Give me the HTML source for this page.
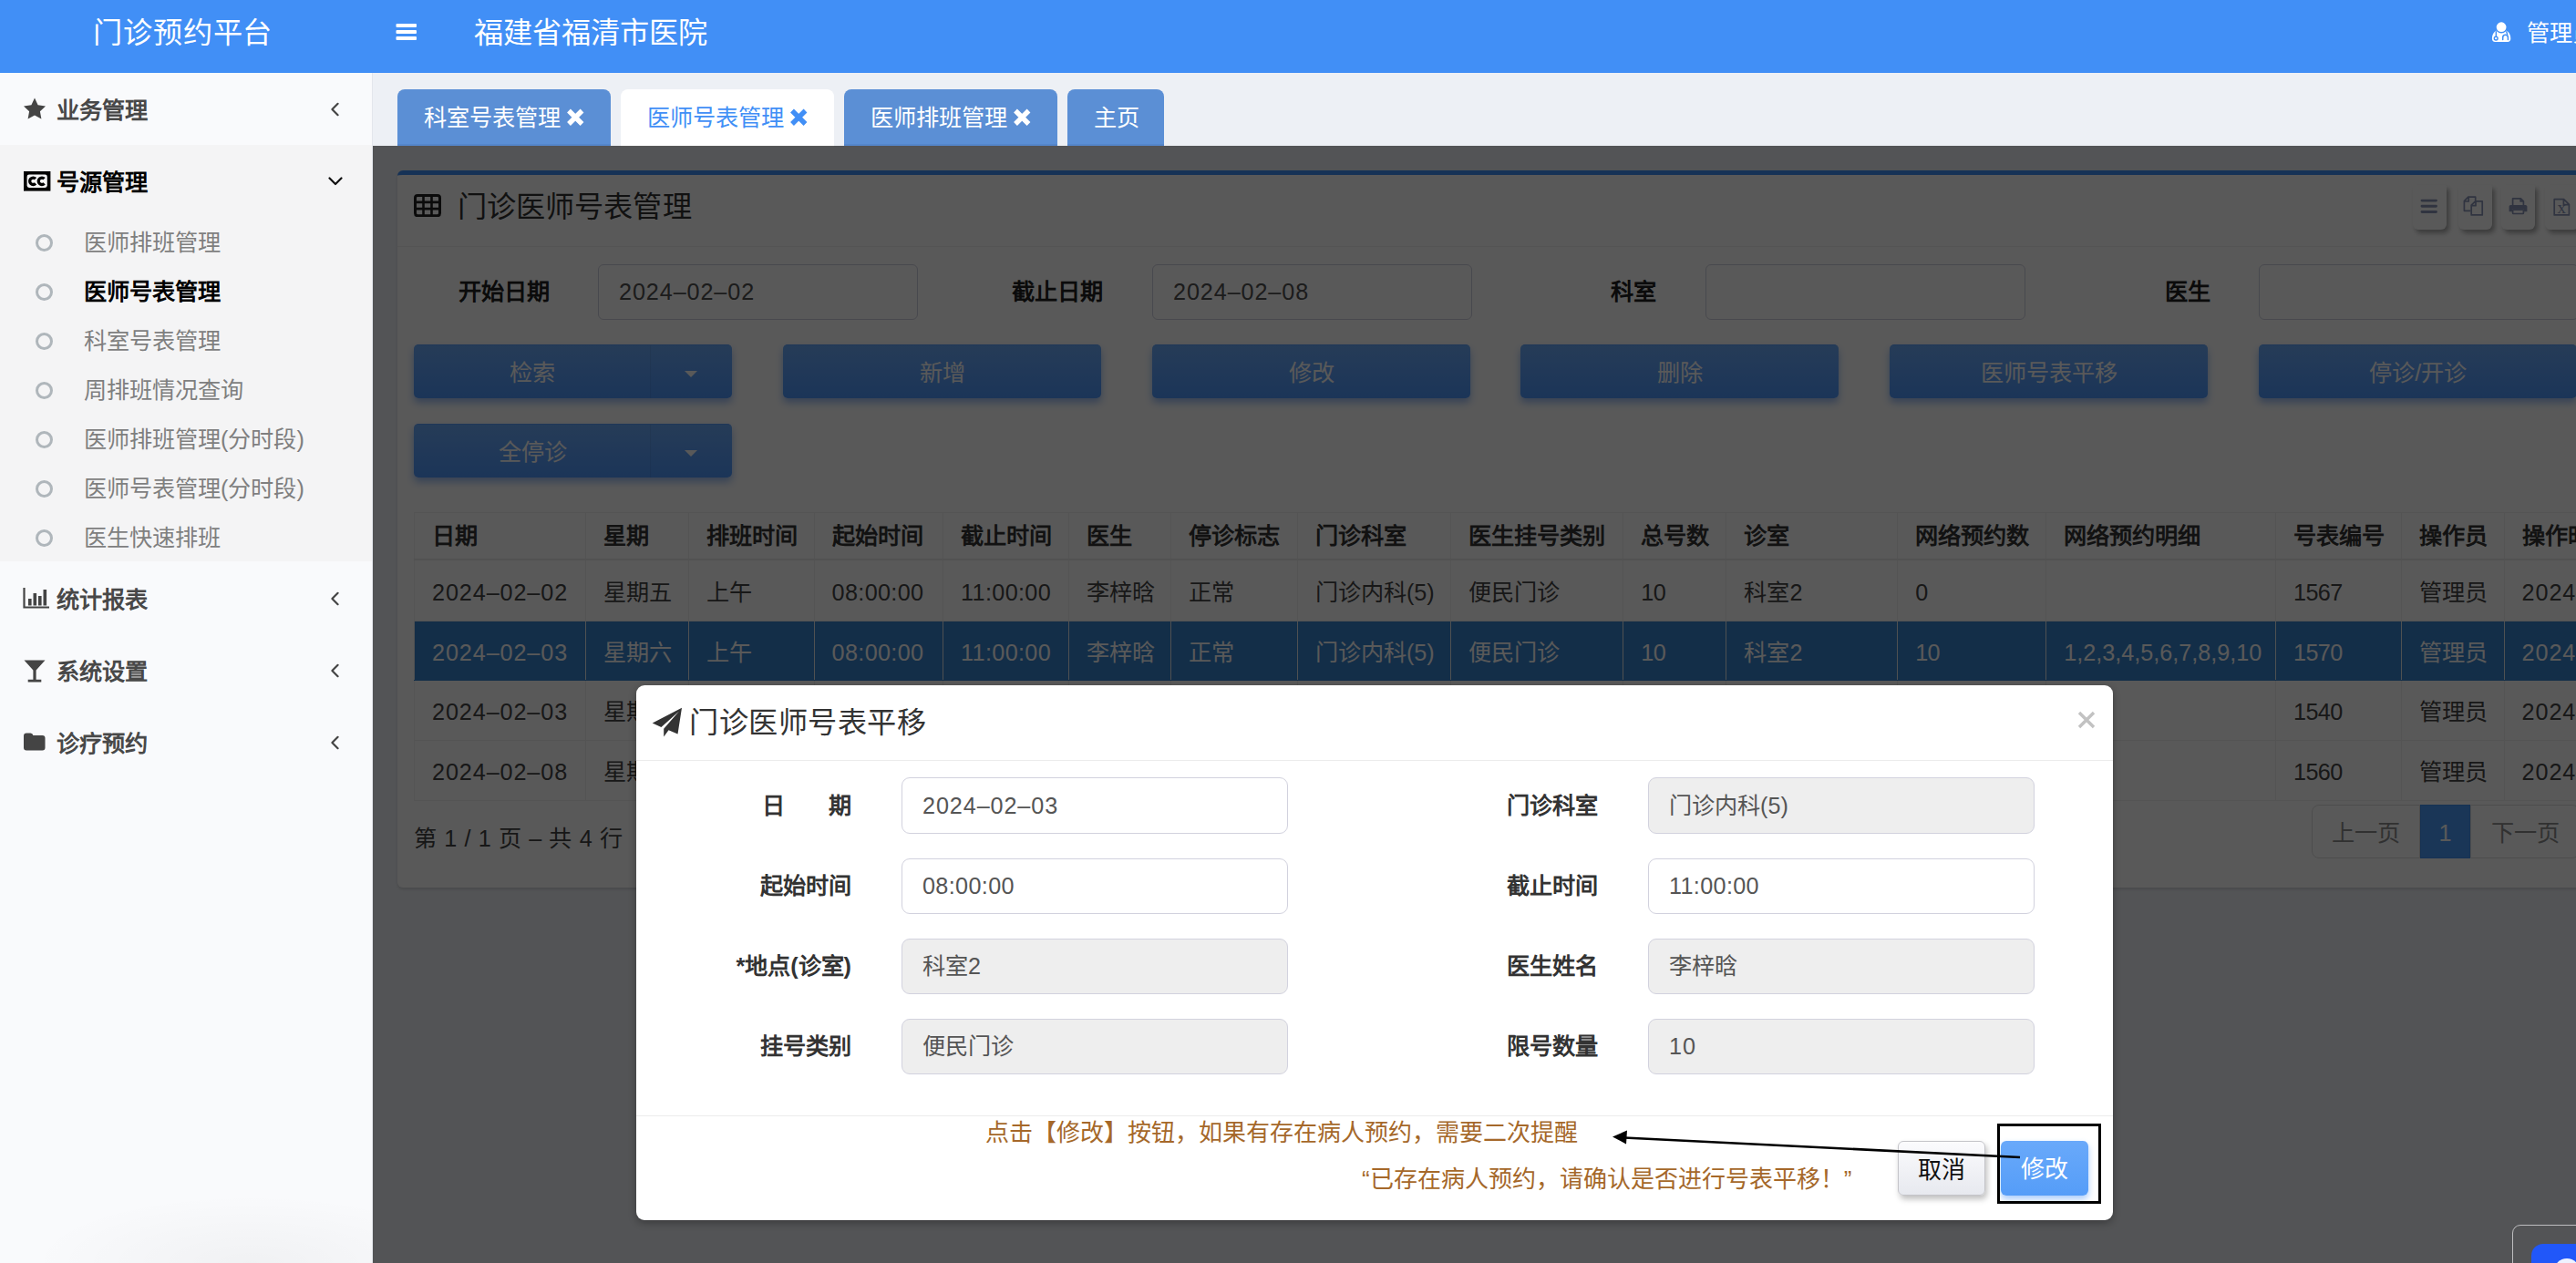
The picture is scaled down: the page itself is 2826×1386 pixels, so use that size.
<!DOCTYPE html>
<html lang="zh-CN">
<head>
<meta charset="utf-8">
<title>门诊预约平台</title>
<style>
*{box-sizing:border-box;margin:0;padding:0}
html,body{width:2826px;height:1386px;overflow:hidden}
body{font-family:"Liberation Sans",sans-serif;background:#edf0f5;position:relative;color:#333;font-size:25.2px}
.abs{position:absolute}
.nw{white-space:nowrap}
/* header */
#hdr{position:absolute;left:0;top:0;width:2826px;height:80px;background:#418ff6;color:#fff}
#hdr .t{position:absolute;top:1px;height:70px;line-height:70px;font-size:32.2px;white-space:nowrap}
/* sidebar */
#side{position:absolute;left:0;top:80px;width:409px;height:1306px;background:radial-gradient(ellipse 240px 75px at 275px 100%,rgba(0,0,0,.035),rgba(0,0,0,0) 100%),#f9fafc;border-right:1px solid #e3e6ec}
.mi{position:absolute;left:0;width:408px;height:79px;line-height:82px;font-weight:bold;color:#484848;font-size:25.2px;white-space:nowrap}
.mi .tx{position:absolute;left:62px;top:0}
.mi svg{position:absolute}
.sub{position:absolute;left:0;width:408px;height:54px;line-height:55px;color:#7f7f7f;white-space:nowrap}
.sub i{position:absolute;left:39px;top:17.5px;width:19px;height:19px;border:3px solid #afb6bb;border-radius:50%}
.sub span{position:absolute;left:92px;top:0}
/* tabs */
.tab{position:absolute;top:98px;height:62px;line-height:63px;background:#5b8fd5;color:#fff;border-radius:8px 8px 0 0;padding-left:28.5px;white-space:nowrap;font-size:25.2px;border-bottom:2px solid #5486cb}
.tab.act{background:#fff;color:#418ff6;border-bottom:none;height:63px}
.tab svg{position:absolute;top:21px}

/* content card */
#card{position:absolute;left:436px;top:187px;width:2466px;height:786.5px;background:#fff;border-top:5px solid #418ff6;border-radius:6px;box-shadow:0 2px 3px rgba(0,0,0,.12)}
#card .hd{position:absolute;left:0;top:0;width:100%;height:79px;border-bottom:1px solid #f0f0f0}
#card .ttl{position:absolute;left:65.5px;top:2px;letter-spacing:.15px;height:66px;line-height:66px;font-size:32.2px;color:#333;white-space:nowrap}
.tb{position:absolute;top:11px;width:37px;height:48.7px;background:#fff;border-radius:2px 2px 6px 6px;box-shadow:3px 4px 5px rgba(0,0,0,.32)}
.tb svg{position:absolute;left:7.5px;top:13px}
.flab{position:absolute;top:98px;height:60px;line-height:61px;margin-left:1.5px;font-weight:bold;color:#222;text-align:right;width:160px;white-space:nowrap}
.finp{position:absolute;top:98px;width:350.8px;height:60.6px;line-height:59px;border:1px solid #cfd0e0;border-radius:6px;background:#fff;padding-left:22px;color:#505050;white-space:nowrap}
.btn{position:absolute;width:349.3px;height:58.7px;line-height:61px;text-align:center;color:#fff;border-radius:5px;background:linear-gradient(#6dabfa,#4f98fd);box-shadow:0 5px 8px rgba(50,120,235,.48);white-space:nowrap;font-size:25.2px;border-top:1px solid #5a9df8}
.btn .sp{position:absolute;left:259px;top:0;width:1px;height:58px;background:rgba(0,0,0,.06)}
.btn .car{position:absolute;left:297px;top:28px;width:0;height:0;border-left:7.5px solid transparent;border-right:7.5px solid transparent;border-top:7.5px solid #fff}
table{position:absolute;left:18px;top:370px;border-collapse:collapse;table-layout:fixed;width:2432.7px}
th,td{border:1px solid #f1f1f1;padding:0 0 0 19px;text-align:left;white-space:nowrap;overflow:hidden;font-size:25.2px}
th{height:51px;font-weight:bold;color:#363636;line-height:30px;vertical-align:middle;padding-top:1px;border-bottom:2px solid #ececec}
td{height:66px;color:#464646;line-height:30px;vertical-align:middle;padding-top:2px}
tr.alt td{background:#fff}
tr.r1 td{height:68px;padding-top:4px}
tr.sel td{height:65.2px;padding-top:3px}
tr.sel td{background:#3783cd;color:#fff;border-color:#3783cd #e3e7ec}
.pgi{position:absolute;left:18px;top:698px;height:60px;line-height:60px;color:#444;white-space:nowrap;letter-spacing:.62px}
.pg{position:absolute;top:691px;height:59px;line-height:61px;text-align:center;color:#8c8c8c;border:1px solid #ddd;white-space:nowrap;font-size:25.2px}
.n{letter-spacing:.9px}
.tm{letter-spacing:.35px}
.d{letter-spacing:-.6px}

/* backdrop + modal */
#bd{position:absolute;left:409px;top:160px;width:2417px;height:1226px;background:rgba(0,0,0,.65)}
#modal{position:absolute;left:698px;top:752px;width:1620px;height:587px;background:#fff;border-radius:9px;box-shadow:0 3px 9px rgba(0,0,0,.3)}
#modal .mh{position:absolute;left:0;top:0;width:100%;height:83px;border-bottom:1px solid #ececec}
#modal .mt{position:absolute;left:58px;top:8px;letter-spacing:.5px;height:66px;line-height:66px;font-size:32.2px;color:#333;white-space:nowrap}
#modal .mf{position:absolute;left:0;top:472px;width:100%;height:1px;background:#ececec}
.ml{position:absolute;height:60px;line-height:60px;font-weight:bold;color:#333;text-align:right;width:220px;white-space:nowrap}
.mi2{position:absolute;width:424px;height:61px;line-height:59px;border:1px solid #d2d2de;border-radius:9px;background:#fff;padding-left:22px;color:#555;white-space:nowrap}
.mi2.dis{background:#eeeeee}
.note{position:absolute;color:#a5682a;font-size:26px;white-space:nowrap;height:40px;line-height:42px}
.b2{position:absolute;top:500px;width:96px;height:60px;line-height:62px;text-align:center;font-size:26px;border-radius:6px;white-space:nowrap}
</style>
</head>
<body>
<!-- HEADER -->
<div id="hdr">
  <div class="t" style="left:102px;letter-spacing:.9px">门诊预约平台</div>
  <svg class="abs" style="left:434px;top:25px" width="24" height="20" viewBox="0 0 24 20"><rect x="0.5" y="1" width="22.5" height="4" rx="1" fill="#fff"/><rect x="0.5" y="8" width="22.5" height="4" rx="1" fill="#fff"/><rect x="0.5" y="15" width="22.5" height="4" rx="1" fill="#fff"/></svg>
  <div class="t" style="left:520px">福建省福清市医院</div>
  <svg class="abs" style="left:2733px;top:24px" width="22" height="23" viewBox="0 0 22 23"><path d="M0.9 18.6 C0.9 14 3 10.8 6 9.6 L16.2 9.6 C19.2 10.8 21.3 14 21.3 18.6 C21.3 20.8 20 22.1 18 22.1 L4.2 22.1 C2.2 22.1 0.9 20.8 0.9 18.6Z" fill="#fff"/><circle cx="11.1" cy="5.7" r="6.7" fill="#418ff6"/><circle cx="11.1" cy="5.7" r="5.4" fill="#fff"/><path d="M5.3 10.2 V16.2" stroke="#418ff6" stroke-width="1.4" fill="none"/><circle cx="5.2" cy="18.1" r="1.9" fill="#fff" stroke="#418ff6" stroke-width="1.4"/><path d="M16.6 10.2 L17.8 14.4" stroke="#418ff6" stroke-width="1.4" fill="none"/><path d="M12.7 19.6 V17.2 C12.7 13.4 18.4 13.4 18.4 17.2 V19.6" fill="none" stroke="#418ff6" stroke-width="1.5" stroke-linecap="round"/></svg>
  <div class="t" style="left:2772px;font-size:25.2px">管理员</div>
</div>

<!-- SIDEBAR -->
<div id="side">
  <div class="abs" style="left:0;top:79px;width:408px;height:457px;background:#f4f4f5"></div>
  <div class="mi" style="top:0">
    <svg style="left:25px;top:27px" width="26" height="25" viewBox="0 0 26 25"><path d="M13 0.6 L16.6 8.3 L25 9.4 L18.9 15.2 L20.4 23.6 L13 19.5 L5.6 23.6 L7.1 15.2 L1 9.4 L9.4 8.3Z" fill="#444"/></svg>
    <span class="tx">业务管理</span>
    <svg style="left:362px;top:32px" width="12" height="16" viewBox="0 0 12 16"><path d="M8.6 1.8 L2.4 8 L8.6 14.2" fill="none" stroke="#444" stroke-width="2.2" stroke-linecap="round" stroke-linejoin="round"/></svg>
  </div>
  <div class="mi" style="top:79px;color:#000">
    <svg style="left:25.5px;top:28.5px" width="30" height="22" viewBox="0 0 30 22"><rect x="0" y="0" width="29.4" height="21.6" fill="#000"/><rect x="3.6" y="3.6" width="22.2" height="14.4" rx="2.4" fill="#f4f4f5"/><path d="M13 8.2 A3.7 3.7 0 1 0 13 13.4" fill="none" stroke="#000" stroke-width="3.3"/><path d="M22.6 8.2 A3.7 3.7 0 1 0 22.6 13.4" fill="none" stroke="#000" stroke-width="3.3"/></svg>
    <span class="tx">号源管理</span>
    <svg style="left:360px;top:34px" width="16" height="12" viewBox="0 0 16 12"><path d="M1.5 2.5 L8 9 L14.5 2.5" fill="none" stroke="#111" stroke-width="2.2" stroke-linecap="round" stroke-linejoin="round"/></svg>
  </div>
  <div class="sub" style="top:159px"><i></i><span>医师排班管理</span></div>
  <div class="sub" style="top:213px;color:#000;font-weight:bold"><i></i><span>医师号表管理</span></div>
  <div class="sub" style="top:267px"><i></i><span>科室号表管理</span></div>
  <div class="sub" style="top:321px"><i></i><span>周排班情况查询</span></div>
  <div class="sub" style="top:375px"><i></i><span>医师排班管理(分时段)</span></div>
  <div class="sub" style="top:429px"><i></i><span>医师号表管理(分时段)</span></div>
  <div class="sub" style="top:483px"><i></i><span>医生快速排班</span></div>
  <div class="mi" style="top:537px">
    <svg style="left:25px;top:27px" width="30" height="24" viewBox="0 0 30 24"><path d="M1.5 1 V22.5 H29" fill="none" stroke="#444" stroke-width="2.2"/><rect x="6" y="13" width="3.6" height="7.5" fill="#444"/><rect x="11.5" y="7" width="3.6" height="13.5" fill="#444"/><rect x="17" y="10" width="3.6" height="10.5" fill="#444"/><rect x="22.5" y="3" width="3.6" height="17.5" fill="#444"/></svg>
    <span class="tx">统计报表</span>
    <svg style="left:362px;top:32px" width="12" height="16" viewBox="0 0 12 16"><path d="M8.6 1.8 L2.4 8 L8.6 14.2" fill="none" stroke="#444" stroke-width="2.2" stroke-linecap="round" stroke-linejoin="round"/></svg>
  </div>
  <div class="mi" style="top:616px">
    <svg style="left:26px;top:28px" width="24" height="25" viewBox="0 0 24 25"><path d="M0.5 0.5 H23.5 L13.6 11.5 V21.7 H19.3 V24.5 H4.7 V21.7 H10.4 V11.5Z" fill="#444"/></svg>
    <span class="tx">系统设置</span>
    <svg style="left:362px;top:32px" width="12" height="16" viewBox="0 0 12 16"><path d="M8.6 1.8 L2.4 8 L8.6 14.2" fill="none" stroke="#444" stroke-width="2.2" stroke-linecap="round" stroke-linejoin="round"/></svg>
  </div>
  <div class="mi" style="top:695px">
    <svg style="left:26px;top:29px" width="24" height="20" viewBox="0 0 24 20"><path d="M0 3.5 Q0 0.5 3 0.5 H7.5 Q10 0.5 10.3 3 H20.5 Q23.5 3 23.5 6 V16.5 Q23.5 19.5 20.5 19.5 H3 Q0 19.5 0 16.5Z" fill="#444"/></svg>
    <span class="tx">诊疗预约</span>
    <svg style="left:362px;top:32px" width="12" height="16" viewBox="0 0 12 16"><path d="M8.6 1.8 L2.4 8 L8.6 14.2" fill="none" stroke="#444" stroke-width="2.2" stroke-linecap="round" stroke-linejoin="round"/></svg>
  </div>
</div>

<!-- TABS -->
<div class="tab" style="left:436px;width:234px">科室号表管理<svg style="left:186px" width="19" height="19" viewBox="0 0 19 19"><path d="M2 2.5 L16.5 17 M16.5 2.5 L2 17" stroke="#fff" stroke-width="5.4" stroke-linecap="butt"/></svg></div>
<div class="tab act" style="left:681px;width:234px">医师号表管理<svg style="left:186px" width="19" height="19" viewBox="0 0 19 19"><path d="M2 2.5 L16.5 17 M16.5 2.5 L2 17" stroke="#418ff6" stroke-width="5.4" stroke-linecap="butt"/></svg></div>
<div class="tab" style="left:926px;width:234px">医师排班管理<svg style="left:186px" width="19" height="19" viewBox="0 0 19 19"><path d="M2 2.5 L16.5 17 M16.5 2.5 L2 17" stroke="#fff" stroke-width="5.4" stroke-linecap="butt"/></svg></div>
<div class="tab" style="left:1171px;width:106px">主页</div>

<!--CONTENT-->
<div id="card">
  <div class="hd">
    <svg class="abs" style="left:18px;top:21px" width="30" height="25" viewBox="0 0 30 25"><rect x="1.5" y="1.5" width="27" height="22.2" rx="2.6" fill="none" stroke="#222" stroke-width="3"/><path d="M1 8.9 H29 M1 16.1 H29 M10.5 2 V23 M19.5 2 V23" stroke="#222" stroke-width="2.6" fill="none"/></svg>
    <div class="ttl">门诊医师号表管理</div>
    <div class="tb" style="left:2211px"><svg width="24" height="24" viewBox="0 0 24 24"><path d="M2 4.1 H17.5 M2 10.3 H17.5 M2 16.5 H17.5" stroke="#8a95b8" stroke-width="2.9" stroke-linecap="round" fill="none"/></svg></div>
    <div class="tb" style="left:2261px"><svg width="24" height="24" viewBox="0 0 24 24" style="top:12px;left:4.5px"><path d="M8.4 16.3 H1.4 V5.6 L5.8 1.2 H13.7 V5.4 M1.4 6 H6.2 V1.4" fill="none" stroke="#8a95b8" stroke-width="1.7" stroke-linejoin="round"/><path d="M9.2 10.2 L13.6 5.9 H21.2 V20.9 H9.2Z M9.2 10.7 H14 V6" fill="none" stroke="#8a95b8" stroke-width="1.7" stroke-linejoin="round"/></svg></div>
    <div class="tb" style="left:2308px"><svg width="24" height="24" viewBox="0 0 24 24" style="top:12px"><path d="M4.6 10.5 V2.8 H13.4 L16.4 5.8 V10.5 M13.2 3 V6 H16.2" fill="none" stroke="#8a95b8" stroke-width="1.7" stroke-linejoin="round"/><path d="M.6 11.6 Q.6 9.9 2.3 9.9 H18.7 Q20.4 9.9 20.4 11.6 V17.3 H16.6 V14.6 H4.4 V17.3 H.6Z" fill="#8a95b8"/><rect x="4.6" y="15.2" width="11.8" height="4.3" rx="0.8" fill="none" stroke="#8a95b8" stroke-width="1.7"/></svg></div>
    <div class="tb" style="left:2356px"><svg width="24" height="24" viewBox="0 0 24 24" style="top:12px"><path d="M2.2 3.6 H12.6 L18.4 9.4 V20.9 H2.2Z M12.4 3.8 V9.6 H18.2" fill="none" stroke="#8a95b8" stroke-width="1.7" stroke-linejoin="round"/><text x="5.4" y="18.8" font-size="19" font-family="Liberation Serif,serif" fill="#8a95b8">x</text></svg></div>
  </div>
  <div class="flab" style="left:5px">开始日期</div><div class="finp n" style="left:220px">2024–02–02</div>
  <div class="flab" style="left:612px">截止日期</div><div class="finp n" style="left:828px">2024–02–08</div>
  <div class="flab" style="left:1219px">科室</div><div class="finp" style="left:1435px"></div>
  <div class="flab" style="left:1827px">医生</div><div class="finp" style="left:2042px"></div>

  <div class="btn" style="left:18px;top:186px"><span style="position:absolute;left:0;width:260px">检索</span><i class="sp"></i><i class="car"></i></div>
  <div class="btn" style="left:423px;top:186px">新增</div>
  <div class="btn" style="left:828px;top:186px">修改</div>
  <div class="btn" style="left:1232px;top:186px">删除</div>
  <div class="btn" style="left:1637px;top:186px">医师号表平移</div>
  <div class="btn" style="left:2042px;top:186px">停诊/开诊</div>
  <div class="btn" style="left:18px;top:273px"><span style="position:absolute;left:0;width:260px">全停诊</span><i class="sp"></i><i class="car"></i></div>

  <table>
    <colgroup><col style="width:187.5px"><col style="width:113.3px"><col style="width:137.8px"><col style="width:141.5px"><col style="width:137.8px"><col style="width:112.4px"><col style="width:138.6px"><col style="width:168.6px"><col style="width:188.8px"><col style="width:113.2px"><col style="width:187.7px"><col style="width:163.1px"><col style="width:251.8px"><col style="width:138.2px"><col style="width:112.4px"><col style="width:140px"></colgroup>
    <tr><th>日期</th><th>星期</th><th>排班时间</th><th>起始时间</th><th>截止时间</th><th>医生</th><th>停诊标志</th><th>门诊科室</th><th>医生挂号类别</th><th>总号数</th><th>诊室</th><th>网络预约数</th><th>网络预约明细</th><th>号表编号</th><th>操作员</th><th>操作时间</th></tr>
    <tr class="alt r1"><td class="n">2024–02–02</td><td>星期五</td><td>上午</td><td class="tm">08:00:00</td><td class="tm">11:00:00</td><td>李梓晗</td><td>正常</td><td>门诊内科(5)</td><td>便民门诊</td><td class="d">10</td><td>科室2</td><td class="d">0</td><td></td><td class="d">1567</td><td>管理员</td><td class="n">2024–02–01</td></tr>
    <tr class="sel"><td class="n">2024–02–03</td><td>星期六</td><td>上午</td><td class="tm">08:00:00</td><td class="tm">11:00:00</td><td>李梓晗</td><td>正常</td><td>门诊内科(5)</td><td>便民门诊</td><td class="d">10</td><td>科室2</td><td class="d">10</td><td>1,2,3,4,5,6,7,8,9,10</td><td class="d">1570</td><td>管理员</td><td class="n">2024–02–01</td></tr>
    <tr class="alt"><td class="n">2024–02–03</td><td>星期六</td><td>下午</td><td class="tm">14:00:00</td><td class="tm">17:00:00</td><td>李梓晗</td><td>正常</td><td>门诊内科(5)</td><td>便民门诊</td><td class="d">10</td><td>科室2</td><td class="d">0</td><td></td><td class="d">1540</td><td>管理员</td><td class="n">2024–02–01</td></tr>
    <tr><td class="n">2024–02–08</td><td>星期四</td><td>上午</td><td class="tm">08:00:00</td><td class="tm">11:00:00</td><td>李梓晗</td><td>正常</td><td>门诊内科(5)</td><td>便民门诊</td><td class="d">10</td><td>科室2</td><td class="d">0</td><td></td><td class="d">1560</td><td>管理员</td><td class="n">2024–02–01</td></tr>
  </table>
  <div class="pgi">第 1 / 1 页 – 共 4 行</div>
  <div class="pg" style="left:2100px;width:119px;border-radius:8px 0 0 8px">上一页</div>
  <div class="pg" style="left:2219px;width:55px;background:#4b9bf8;color:#fff;border-color:#3f8fee">1</div>
  <div class="pg" style="left:2274px;width:120px;border-radius:0 8px 8px 0">下一页</div>
</div>

<!--BACKDROP-->
<div id="bd"></div>
<div id="modal">
  <div class="mh">
    <svg class="abs" style="left:17px;top:24px" width="34" height="33" viewBox="0 0 34 33"><path d="M33 0.8 L28.5 29.5 L18.5 25.2 L13.2 32.4 L13.2 23.8 L30 4.6 L10.4 21.9 L0.7 17.4Z" fill="#333"/></svg>
    <div class="mt">门诊医师号表平移</div>
    <svg class="abs" style="left:1581px;top:28px" width="20" height="20" viewBox="0 0 20 20"><path d="M2 2 L18 18 M18 2 L2 18" stroke="#c2c2c2" stroke-width="3.4"/></svg>
  </div>
  <div class="ml" style="left:16px;top:102px">日<span style="display:inline-block;width:48px"></span>期</div><div class="mi2 n" style="left:291px;top:101px;height:62px;line-height:61px">2024–02–03</div>
  <div class="ml" style="left:16px;top:190px">起始时间</div><div class="mi2 tm" style="left:291px;top:190px">08:00:00</div>
  <div class="ml" style="left:16px;top:278px">*地点(诊室)</div><div class="mi2 dis" style="left:291px;top:278px">科室2</div>
  <div class="ml" style="left:16px;top:366px">挂号类别</div><div class="mi2 dis" style="left:291px;top:366px">便民门诊</div>
  <div class="ml" style="left:835px;top:102px">门诊科室</div><div class="mi2 dis" style="left:1110px;top:101px;height:62px;line-height:61px">门诊内科(5)</div>
  <div class="ml" style="left:835px;top:190px">截止时间</div><div class="mi2 tm" style="left:1110px;top:190px">11:00:00</div>
  <div class="ml" style="left:835px;top:278px">医生姓名</div><div class="mi2 dis" style="left:1110px;top:278px">李梓晗</div>
  <div class="ml" style="left:835px;top:366px">限号数量</div><div class="mi2 dis n" style="left:1110px;top:366px">10</div>
  <div class="mf"></div>
  <div class="note" style="left:383px;top:470px">点击【修改】按钮，如果有存在病人预约，需要二次提醒</div>
  <div class="note" style="left:796px;top:521px">“已存在病人预约，请确认是否进行号表平移！”</div>
  <div class="b2" style="left:1384px;color:#111;border:1px solid #c4c4c9;background:linear-gradient(#fbfbfd,#e7e9ef);box-shadow:2px 4px 6px rgba(0,0,0,.25)">取消</div>
  <div class="b2" style="left:1496.5px;color:#fff;background:linear-gradient(#69a9fa,#559df8);box-shadow:0 4px 7px rgba(65,143,246,.45)">修改</div>
  <div class="abs" style="left:1493px;top:481px;width:113.5px;height:88px;border:3px solid #000"></div>
  <svg class="abs" style="left:1060px;top:480px" width="480" height="60" viewBox="0 0 480 60"><path d="M24 16.5 L458 38" stroke="#000" stroke-width="2.6" fill="none"/><path d="M11 15.5 L27 8.5 L26 23.5Z" fill="#000"/></svg>
</div>

<!--MODAL-->
<div class="abs" style="left:2756px;top:1344px;width:90px;height:60px;border:1.6px solid #bdbdbf;border-radius:9px 0 0 0"></div>
<div class="abs" style="left:2777px;top:1365px;width:70px;height:40px;background:#2157f9;border-radius:13px 0 0 0"></div>
<div class="abs" style="left:2802px;top:1381px;width:28px;height:28px;background:#eef2ff;border-radius:50%"></div>

</body>
</html>
